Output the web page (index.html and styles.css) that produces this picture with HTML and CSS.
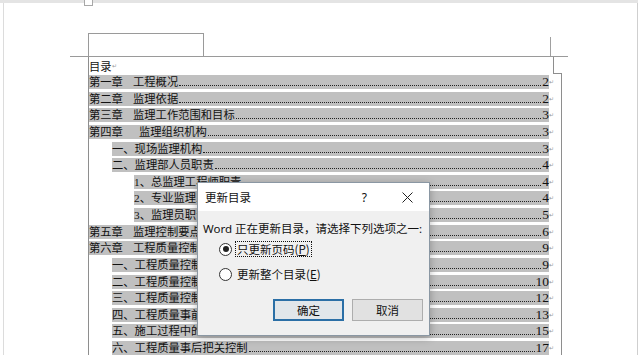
FILE: index.html
```html
<!DOCTYPE html>
<html lang="zh-CN">
  <head>
    <meta charset="UTF-8" />
    <meta name="viewport" content="width=device-width, initial-scale=1.0" />
    <title>更新目录</title>
    <link rel="stylesheet" href="styles.css">
  </head>
  <body>
    <div class="screen">
      <div class="ruler"><span class="ruler-mark"></span></div>

      <div class="page">
        <div class="page-header">
          <div class="header-box"></div>
          <div class="crop-mark"></div>
        </div>

        <div class="toc">
          <div class="toc-title">
            <span class="toc-title-text">目录<span class="mark">↵</span></span>
            <span class="step"></span>
          </div>

          <div class="toc-list">
            <div class="row"><span class="hl"><span class="chap">第一章</span>工程概况<span class="leader"></span><span class="num">2</span></span><span class="mark">↵</span></div>
            <div class="row"><span class="hl"><span class="chap">第二章</span>监理依据<span class="leader"></span><span class="num">2</span></span><span class="mark">↵</span></div>
            <div class="row"><span class="hl"><span class="chap">第三章</span>监理工作范围和目标<span class="leader"></span><span class="num">3</span></span><span class="mark">↵</span></div>
            <div class="row"><span class="hl"><span class="chap">第四章</span><span class="wide">监理组织机构</span><span class="leader"></span><span class="num">3</span></span><span class="mark">↵</span></div>
            <div class="row l2"><span class="hl">一、现场监理机构<span class="leader"></span><span class="num">3</span></span><span class="mark">↵</span></div>
            <div class="row l2"><span class="hl">二、监理部人员职责<span class="leader"></span><span class="num">4</span></span><span class="mark">↵</span></div>
            <div class="row l3"><span class="hl">1、总监理工程师职责<span class="leader"></span><span class="num">4</span></span><span class="mark">↵</span></div>
            <div class="row l3"><span class="hl">2、专业监理工程师职责<span class="leader"></span><span class="num">4</span></span><span class="mark">↵</span></div>
            <div class="row l3"><span class="hl">3、监理员职责<span class="leader"></span><span class="num">5</span></span><span class="mark">↵</span></div>
            <div class="row"><span class="hl"><span class="chap">第五章</span>监理控制要点<span class="leader"></span><span class="num">6</span></span><span class="mark">↵</span></div>
            <div class="row"><span class="hl"><span class="chap">第六章</span>工程质量控制<span class="leader"></span><span class="num">9</span></span><span class="mark">↵</span></div>
            <div class="row l2"><span class="hl">一、工程质量控制原则<span class="leader"></span><span class="num">9</span></span><span class="mark">↵</span></div>
            <div class="row l2"><span class="hl">二、工程质量控制依据<span class="leader"></span><span class="num">10</span></span><span class="mark">↵</span></div>
            <div class="row l2"><span class="hl">三、工程质量控制措施<span class="leader"></span><span class="num">12</span></span><span class="mark">↵</span></div>
            <div class="row l2"><span class="hl">四、工程质量事前控制<span class="leader"></span><span class="num">13</span></span><span class="mark">↵</span></div>
            <div class="row l2"><span class="hl">五、施工过程中的质量控制要点<span class="leader"></span><span class="num">15</span></span><span class="mark">↵</span></div>
            <div class="row l2"><span class="hl">六、工程质量事后把关控制<span class="leader"></span><span class="num">17</span></span><span class="mark">↵</span></div>
          </div>
        </div>
      </div>

      <!-- dialog sits over the document -->
      <div class="dialog">
        <div class="dlg-title">
          <span class="dlg-name">更新目录</span>
          <span class="dlg-help">?</span>
          <svg class="dlg-close" width="11" height="11" viewBox="0 0 11 11">
            <path d="M0.5 0.5 L10.5 10.5 M10.5 0.5 L0.5 10.5" stroke="#222" stroke-width="1" fill="none" />
          </svg>
        </div>
        <div class="dlg-body">
          <p class="prompt">Word 正在更新目录，请选择下列选项之一:</p>
          <label class="opt"><span class="radio on"></span><span class="opt-text focus">只更新页码(<u>P</u>)</span></label>
          <label class="opt opt-2"><span class="radio"></span><span class="opt-text">更新整个目录(<u>E</u>)</span></label>
          <div class="buttons">
            <button class="btn btn-primary">确定</button>
            <button class="btn">取消</button>
          </div>
        </div>
      </div>
    </div>
  </body>
</html>
```

FILE: styles.css
```css
/* ------ */
/* General Styling */
* {
  margin: 0;
  padding: 0;
  box-sizing: border-box;
}
body {
  margin: 0;
  background-color: white;
  font-family: "Liberation Serif", "Noto Sans CJK SC", serif;
  color: #111;
}

.screen {
  position: relative;
  width: 638px;
  height: 355px;
  overflow: hidden;
  background-color: white;
}

/* top strip */
.ruler {
  position: relative;
  height: 3px;
  background-color: #e4e4e4;
}
.ruler-mark {
  position: absolute;
  left: 84px;
  top: 0;
  width: 9px;
  height: 6px;
  background-color: white;
  border: 1px solid #a8a8a8;
  border-top: none;
}

/* ------ */
/* Document page */
.page {
  margin-left: 3px;
  height: 352px;
  border-left: 1px solid #dcdcdc;
  border-right: 1px solid #cfcfcf;
}

.page-header {
  display: flex;
  justify-content: space-between;
  align-items: flex-end;
  margin-left: 66px;
  width: 498px;
  height: 54px;
  border-bottom: 1px solid #9a9a9a;
}
.header-box {
  margin-left: 18px;
  width: 116px;
  height: 23px;
  border: 1px solid #9a9a9a;
  border-bottom: none;
}
.crop-mark {
  width: 1px;
  height: 19px;
  margin-right: 17px;
  background-color: #a0a0a0;
}

.toc {
  margin-left: 84px;
  width: 474px;
  border-left: 1px solid #8e8e8e;
  font-size: 11.3px;
}

.toc-title {
  display: flex;
  height: 17px;
}
.toc-title-text {
  flex: 1;
  display: flex;
  align-items: center;
  padding-top: 1px;
}
.step {
  width: 9px;
  border-left: 1px solid #8e8e8e;
  border-bottom: 1px solid #8e8e8e;
}

.toc-list {
  border-right: 1px solid #8e8e8e;
}

.row {
  display: flex;
  height: 16.64px;
  padding-right: 8px;
}
.row.l2 {
  padding-left: 23px;
}
.row.l3 {
  padding-left: 45px;
}

.hl {
  flex: 1;
  display: flex;
  align-items: flex-start;
  height: 14px;
  margin-top: 1px;
  line-height: 14px;
  white-space: nowrap;
  background-color: #c0c0c0;
}
.chap {
  flex-shrink: 0;
  width: 44px;
}
.wide {
  margin-left: 6px;
}
.leader {
  flex: 1;
  height: 11px;
  margin: 0 1px;
  border-bottom: 1px dotted #222;
}
.num {
  font-family: "Liberation Serif", serif;
  font-size: 13.5px;
  line-height: 14px;
}
.mark {
  width: 4px;
  font-size: 6px;
  line-height: 16px;
  color: #9a9a9a;
}

/* ------ */
/* Dialog */
.dialog {
  position: absolute;
  left: 197px;
  top: 182px;
  width: 233px;
  height: 154px;
  border: 1px solid #8a97a3;
  box-shadow: 0 2px 8px rgba(0, 0, 0, 0.28);
  font-family: "Noto Sans", "Noto Sans CJK SC", sans-serif;
  font-size: 11.5px;
  color: #111;
}

.dlg-title {
  display: flex;
  align-items: center;
  height: 28px;
  padding-left: 7px;
  background-color: white;
}
.dlg-name {
  flex: 1;
  font-family: "Noto Sans CJK SC", sans-serif;
}
.dlg-help {
  margin-right: 35px;
  font-size: 12px;
}
.dlg-close {
  margin-right: 16px;
}

.dlg-body {
  display: flex;
  flex-direction: column;
  height: 124px;
  padding: 10px 6px 0 5px;
  background-color: #f0f0f0;
}
.prompt {
  height: 16px;
  line-height: 16px;
  white-space: nowrap;
}

.opt {
  display: flex;
  align-items: center;
  height: 16px;
  margin-top: 4px;
  padding-left: 16px;
  font-family: "Noto Sans CJK SC", sans-serif;
}
.opt-2 {
  margin-top: 9px;
}
.radio {
  position: relative;
  width: 13px;
  height: 13px;
  border: 1px solid #333;
  border-radius: 50%;
  background-color: white;
}
.radio.on::after {
  content: "";
  position: absolute;
  left: 2.5px;
  top: 2.5px;
  width: 6px;
  height: 6px;
  border-radius: 50%;
  background-color: #222;
}
.opt-text {
  margin-left: 3px;
  padding: 0 1px;
  line-height: 14px;
  border: 1px solid transparent;
}
.opt-text.focus {
  border: 1px dotted #111;
}

.buttons {
  display: flex;
  justify-content: flex-end;
  gap: 8px;
  margin-top: 17px;
}
.btn {
  width: 71px;
  height: 22px;
  font-family: "Noto Sans CJK SC", sans-serif;
  font-size: 11.5px;
  color: #111;
  background-color: #e1e1e1;
  border: 1px solid #adadad;
}
.btn-primary {
  background-color: #e1e6ea;
  border: 2px solid #2b6fa6;
}
```
